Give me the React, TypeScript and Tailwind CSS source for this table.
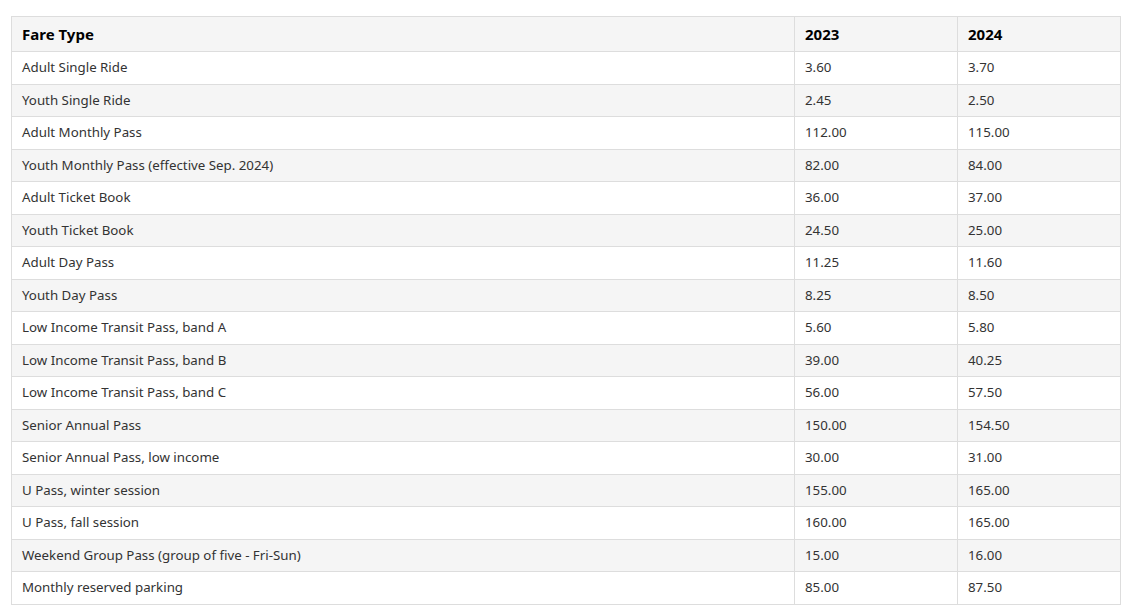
const rows: [string, string, string][] = [
  ['Adult Single Ride', '3.60', '3.70'],
  ['Youth Single Ride', '2.45', '2.50'],
  ['Adult Monthly Pass', '112.00', '115.00'],
  ['Youth Monthly Pass (effective Sep. 2024)', '82.00', '84.00'],
  ['Adult Ticket Book', '36.00', '37.00'],
  ['Youth Ticket Book', '24.50', '25.00'],
  ['Adult Day Pass', '11.25', '11.60'],
  ['Youth Day Pass', '8.25', '8.50'],
  ['Low Income Transit Pass, band A', '5.60', '5.80'],
  ['Low Income Transit Pass, band B', '39.00', '40.25'],
  ['Low Income Transit Pass, band C', '56.00', '57.50'],
  ['Senior Annual Pass', '150.00', '154.50'],
  ['Senior Annual Pass, low income', '30.00', '31.00'],
  ['U Pass, winter session', '155.00', '165.00'],
  ['U Pass, fall session', '160.00', '165.00'],
  ['Weekend Group Pass (group of five - Fri-Sun)', '15.00', '16.00'],
  ['Monthly reserved parking', '85.00', '87.50'],
];

export default function App() {
  return (
    <div className="bg-white pl-[11px] pr-[10px] pt-4 font-['Noto_Sans',sans-serif]">
      <table className="w-full border-collapse table-fixed text-[13.3px] text-[#333]">
        <colgroup>
          <col />
          <col className="w-[163px]" />
          <col className="w-[163px]" />
        </colgroup>
        <thead>
          <tr className="h-[35px] bg-[#f5f5f5]">
            {['Fare Type', '2023', '2024'].map((h) => (
              <th key={h} className="border border-[#dddddd] px-[10px] text-left text-[15px] font-bold text-black">
                {h}
              </th>
            ))}
          </tr>
        </thead>
        <tbody>
          {rows.map((r, i) => (
            <tr key={r[0]} className={`h-[32.5px] ${i % 2 === 1 ? 'bg-[#f5f5f5]' : 'bg-white'}`}>
              {r.map((c, j) => (
                <td key={j} className="border border-[#dddddd] px-[10px] pt-px">
                  {c}
                </td>
              ))}
            </tr>
          ))}
        </tbody>
      </table>
    </div>
  );
}
